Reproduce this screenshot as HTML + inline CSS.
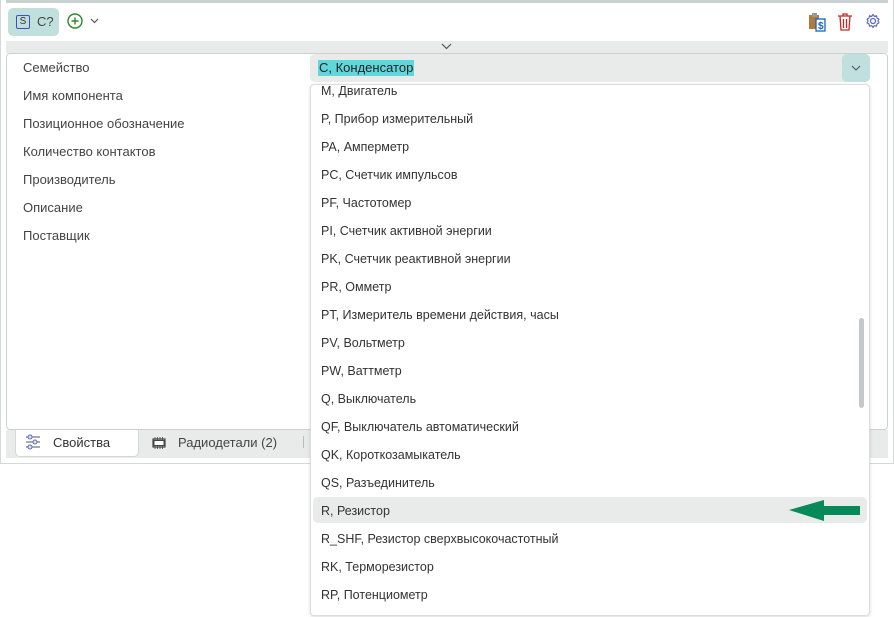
<!DOCTYPE html>
<html><head><meta charset="utf-8"><style>
*{box-sizing:border-box;margin:0;padding:0}
body{width:894px;height:617px;background:#fff;font-family:"Liberation Sans",sans-serif;font-size:13px;color:#333;position:relative;overflow:hidden}
.abs{position:absolute}
.lbl{position:absolute;left:23px;font-size:13px;color:#444}
.it{position:absolute;left:321px;font-size:12.5px;color:#333}
</style></head><body>
<div class="abs" style="left:0;top:0;width:894px;height:464px;border:1px solid #d3d8d8;border-top:none"></div>
<div class="abs" style="left:6px;top:0;width:882px;height:3px;background:#c9d2d1"></div>
<div class="abs" style="left:8px;top:8px;width:51px;height:28px;background:#bfe0dc;border-radius:5px"></div>
<div class="abs" style="left:16px;top:15px;width:14px;height:14px;border:1px solid #3f51b5;border-radius:2px;font-size:10px;text-align:center;line-height:12px;color:#333">S</div>
<div class="abs" style="left:37px;top:14px;font-size:13px;color:#444">C?</div>
<svg class="abs" style="left:67px;top:13px" width="16" height="16"><circle cx="8" cy="8" r="7" fill="none" stroke="#2a8a2a" stroke-width="1.4"/><path d="M8 4.5v7M4.5 8h7" stroke="#2a8a2a" stroke-width="1.4"/></svg>
<svg class="abs" style="left:90px;top:18px" width="9" height="6"><path d="M1 1l3.5 3.5L8 1" fill="none" stroke="#555" stroke-width="1.2"/></svg>
<svg class="abs" style="left:808px;top:12px" width="18" height="20"><rect x="1" y="3" width="10" height="14" fill="#b07a3a"/><rect x="4" y="1" width="5" height="4" fill="#999"/><rect x="8" y="7" width="9" height="12" fill="#fff" stroke="#1565c0" stroke-width="1.3"/><text x="10" y="17" font-size="10" font-weight="bold" fill="#1565c0" font-family="Liberation Sans">$</text></svg>
<svg class="abs" style="left:837px;top:12px" width="16" height="19"><path d="M1 4h14M6 4V2h4v2M3 4l1 14h8l1-14M6.5 7v9M9.5 7v9" fill="none" stroke="#c62828" stroke-width="1.3"/></svg>
<svg class="abs" style="left:865px;top:13px" width="16" height="16"><circle cx="8" cy="8" r="2.5" fill="none" stroke="#5c6bc0" stroke-width="1.3"/><path d="M8 1.5l1.3 1.8 2.2-.5.5 2.2 1.9 1.2-.9 1.8.9 1.8-1.9 1.2-.5 2.2-2.2-.5L8 14.5l-1.3-1.8-2.2.5-.5-2.2-1.9-1.2.9-1.8-.9-1.8 1.9-1.2.5-2.2 2.2.5z" fill="none" stroke="#5c6bc0" stroke-width="1.2"/></svg>
<div class="abs" style="left:6px;top:41px;width:882px;height:12px;background:#e9ebea"></div>
<svg class="abs" style="left:441px;top:43px" width="11" height="7"><path d="M1 1l4.5 4.5L10 1" fill="none" stroke="#555" stroke-width="1.2"/></svg>
<div class="abs" style="left:6px;top:53px;width:882px;height:377px;border:1px solid #c9d2d1;border-radius:4px;background:#fff"></div>
<div class="lbl" style="top:60px">Семейство</div>
<div class="lbl" style="top:88px">Имя компонента</div>
<div class="lbl" style="top:116px">Позиционное обозначение</div>
<div class="lbl" style="top:144px">Количество контактов</div>
<div class="lbl" style="top:172px">Производитель</div>
<div class="lbl" style="top:200px">Описание</div>
<div class="lbl" style="top:228px">Поставщик</div>
<div class="abs" style="left:6px;top:430px;width:882px;height:28px;background:#e9ebea"></div>
<div class="abs" style="left:15px;top:430px;width:124px;height:27px;background:#fff;border:1px solid #d3d8d8;border-top:none;border-radius:0 0 5px 5px"></div>
<svg class="abs" style="left:25px;top:434px" width="16" height="16"><path d="M1 3h14M1 8h14M1 13h14" stroke="#555" stroke-width="1"/><circle cx="5" cy="3" r="2" fill="#dfe3f7" stroke="#5c6bc0"/><circle cx="10" cy="8" r="2" fill="#dfe3f7" stroke="#5c6bc0"/><circle cx="5" cy="13" r="2" fill="#dfe3f7" stroke="#5c6bc0"/></svg>
<div class="abs" style="left:53px;top:435px;color:#333">Свойства</div>
<svg class="abs" style="left:151px;top:437px" width="16" height="12"><rect x="2" y="2" width="12" height="8" fill="none" stroke="#444" stroke-width="1.2"/><path d="M4 0v12M6.5 0v12M9 0v12M11.5 0v12" stroke="#444" stroke-width="0.8"/><rect x="3" y="3.5" width="10" height="5" fill="#fff" stroke="#444"/></svg>
<div class="abs" style="left:178px;top:435px;color:#444">Радиодетали (2)</div>
<div class="abs" style="left:303px;top:436px;width:1px;height:12px;background:#bbb"></div>
<div class="abs" style="left:310px;top:54px;width:560px;height:28px;background:#e9ebea;border-radius:5px"></div>
<div class="abs" style="left:318px;top:60px;background:#5fd7dc;color:#222;padding:0 1px;line-height:16px">С, Конденсатор</div>
<div class="abs" style="left:842px;top:54px;width:28px;height:28px;background:#bfe0dc;border-radius:5px"></div>
<svg class="abs" style="left:851px;top:65px" width="10" height="6"><path d="M1 1l4 4 4-4" fill="none" stroke="#555" stroke-width="1.1"/></svg>
<div class="abs" style="left:310px;top:84px;width:560px;height:532px;background:#fff;border:1px solid #ddd;border-radius:4px;box-shadow:0 1px 3px rgba(0,0,0,.15);overflow:hidden">
</div>
<div class="abs" style="left:313px;top:497px;width:554px;height:26px;background:#e9ebea;border-radius:5px"></div>
<div class="abs" style="left:859px;top:318px;width:5px;height:90px;background:#c3c8c8;border-radius:3px"></div>
<svg class="abs" style="left:789px;top:499px" width="72" height="22"><path d="M0 11L35 1v6h36v9H35v6z" fill="#078a5a"/></svg>
<div class="it" style="top:84px">M, Двигатель</div>
<div class="it" style="top:112px">P, Прибор измерительный</div>
<div class="it" style="top:140px">PA, Амперметр</div>
<div class="it" style="top:168px">PC, Счетчик импульсов</div>
<div class="it" style="top:196px">PF, Частотомер</div>
<div class="it" style="top:224px">PI, Счетчик активной энергии</div>
<div class="it" style="top:252px">PK, Счетчик реактивной энергии</div>
<div class="it" style="top:280px">PR, Омметр</div>
<div class="it" style="top:308px">PT, Измеритель времени действия, часы</div>
<div class="it" style="top:336px">PV, Вольтметр</div>
<div class="it" style="top:364px">PW, Ваттметр</div>
<div class="it" style="top:392px">Q, Выключатель</div>
<div class="it" style="top:420px">QF, Выключатель автоматический</div>
<div class="it" style="top:448px">QK, Короткозамыкатель</div>
<div class="it" style="top:476px">QS, Разъединитель</div>
<div class="it" style="top:504px">R, Резистор</div>
<div class="it" style="top:532px">R_SHF, Резистор сверхвысокочастотный</div>
<div class="it" style="top:560px">RK, Терморезистор</div>
<div class="it" style="top:588px">RP, Потенциометр</div>
</body></html>
